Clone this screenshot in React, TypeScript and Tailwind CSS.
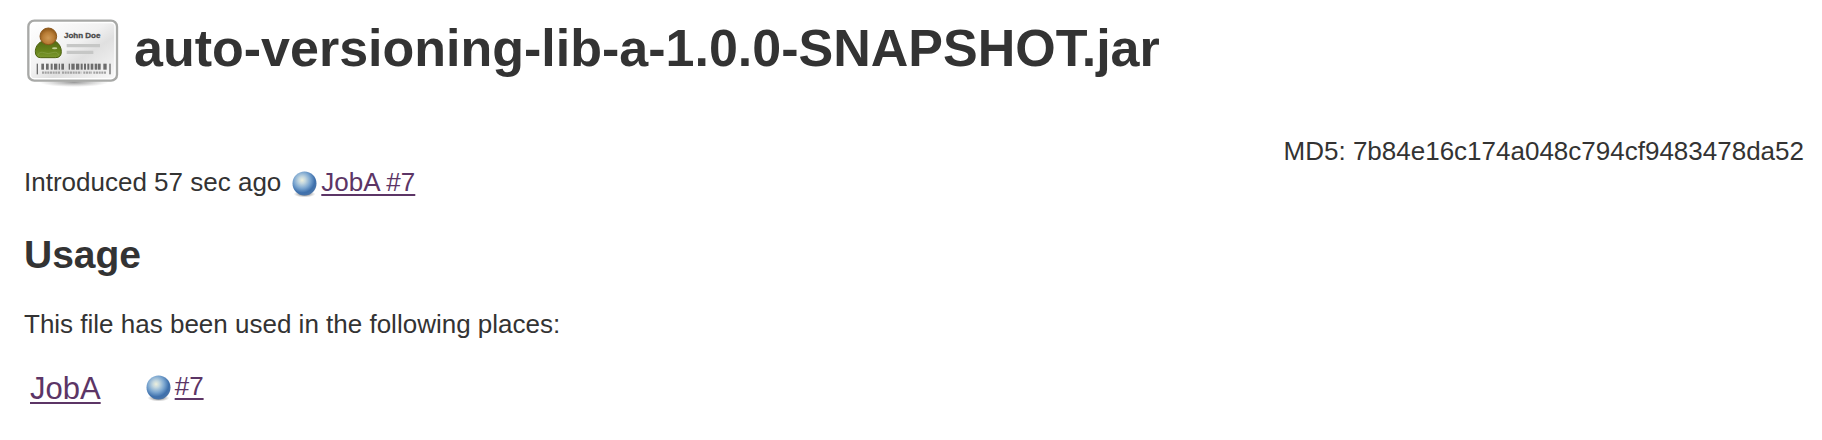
function FingerprintIcon() {
  const bars = [
    [16, 2], [23, 4], [30, 4], [37, 3], [42, 5], [49, 2], [53, 4], [64, 2], [68, 5], [75, 5],
    [82, 3], [87, 3], [92, 3], [97, 4], [103, 4], [108, 4], [116, 5], [125, 2],
  ];
  return (
    <svg viewBox="0 0 144 104" className="h-[70px] w-24 shrink-0" aria-hidden="true">
      <defs>
        <linearGradient id="card" x1="0" y1="0" x2="1" y2="1">
          <stop offset="0" stopColor="#ffffff" />
          <stop offset="0.45" stopColor="#f1f1f1" />
          <stop offset="0.62" stopColor="#e0e0e0" />
          <stop offset="1" stopColor="#f8f8f8" />
        </linearGradient>
        <radialGradient id="head" cx="0.5" cy="0.6" r="0.55">
          <stop offset="0" stopColor="#d09a56" />
          <stop offset="0.6" stopColor="#b97d36" />
          <stop offset="1" stopColor="#925b1b" />
        </radialGradient>
        <linearGradient id="torso" x1="0" y1="0" x2="0" y2="1">
          <stop offset="0" stopColor="#566c14" />
          <stop offset="0.55" stopColor="#66831a" />
          <stop offset="1" stopColor="#7c982f" />
        </linearGradient>
        <radialGradient id="shade">
          <stop offset="0" stopColor="#555" stopOpacity="0.6" />
          <stop offset="1" stopColor="#777" stopOpacity="0" />
        </radialGradient>
      </defs>
      <ellipse cx="72" cy="96" rx="52" ry="7" fill="url(#shade)" />
      <rect x="3.5" y="3.5" width="133" height="90" rx="9" fill="#fff" stroke="#a8a9a7" strokeWidth="3.5" />
      <rect x="7.5" y="7.5" width="125" height="82" rx="5" fill="url(#card)" />
      <path
        d="M23 35C17 38 14 44 14 50C14 56 17 59 22 59H44C50 59 53 56 53 50C53 44 50 38 45 35Z"
        fill="url(#torso)"
        stroke="#4c6110"
        strokeWidth="1.5"
      />
      <path d="M18 56Q19 50 25 51Q33 55 42 51Q48 50 49 56" fill="none" stroke="#8aa24a" strokeWidth="1" />
      <ellipse cx="43" cy="45" rx="4" ry="1.5" fill="#c3d095" />
      <circle cx="33.5" cy="27" r="12.5" fill="url(#head)" stroke="#8c571b" strokeWidth="1.5" />
      <text
        x="57"
        y="30"
        fontFamily="Liberation Sans, sans-serif"
        fontWeight="700"
        fontSize="12"
        fill="#4a4a4a"
        stroke="#4a4a4a"
        strokeWidth="0.5"
      >
        John Doe
      </text>
      <path d="M61 41H111M61 51H101" stroke="#c6c7c6" strokeWidth="5" />
      {bars.map(([x, w]) => (
        <rect key={x} x={x} y="68" width={w} height={x === 16 || x === 125 ? 16 : 9} fill="#6c6c6c" />
      ))}
      <path d="M24 81.5H51M54 81.5H83M86 81.5H99M101 81.5H121" stroke="#a2a2a2" strokeWidth="3.5" strokeDasharray="3 1" />
    </svg>
  );
}

function StatusBall() {
  return (
    <svg viewBox="0 0 32 32" className="size-8 shrink-0" role="img" aria-label="Success">
      <defs>
        <radialGradient id="ball" cx="0.4" cy="0.36" r="0.66">
          <stop offset="0" stopColor="#eef0dc" />
          <stop offset="0.22" stopColor="#c2d6df" />
          <stop offset="0.52" stopColor="#7ba6d0" />
          <stop offset="0.8" stopColor="#3e70ac" />
          <stop offset="1" stopColor="#4a74a8" />
        </radialGradient>
        <radialGradient id="ballShade">
          <stop offset="0.4" stopColor="#444" stopOpacity="0.5" />
          <stop offset="1" stopColor="#777" stopOpacity="0" />
        </radialGradient>
      </defs>
      <ellipse cx="15.5" cy="28" rx="11" ry="3.5" fill="url(#ballShade)" />
      <circle cx="15.5" cy="17.5" r="12" fill="url(#ball)" />
    </svg>
  );
}

const link = "text-[#5c3566] underline decoration-2 underline-offset-3";

export default function App() {
  return (
    <main className="bg-white px-6 pt-[18px] pb-8 font-['Liberation_Sans',Arial,sans-serif] text-[26px] leading-[30px] text-[#333]">
      <h1 className="flex items-start gap-3 pl-0.5 text-[52px] leading-[60px] font-bold">
        <FingerprintIcon />
        <span>auto-versioning-lib-a-1.0.0-SNAPSHOT.jar</span>
      </h1>
      <p className="-mr-1.5 mt-12 text-right">MD5: 7b84e16c174a048c794cf9483478da52</p>
      <p className="flex items-center">
        <span>Introduced 57 sec ago</span>
        <span className="ml-2 flex items-center">
          <StatusBall />
          <a href="#job-a-7" className={link}>JobA #7</a>
        </span>
      </p>
      <h2 className="mt-[34px] text-[39px] leading-[46px] font-bold">Usage</h2>
      <p className="mt-[31px]">This file has been used in the following places:</p>
      <table className="mt-[31px]">
        <tbody>
          <tr>
            <td className="pt-px pr-[42px] pl-1.5 align-top text-[31px] leading-9">
              <a href="#job-a" className={link}>JobA</a>
            </td>
            <td className="align-top">
              <span className="flex items-center">
                <StatusBall />
                <a href="#build-7" className={link}>#7</a>
              </span>
            </td>
          </tr>
        </tbody>
      </table>
    </main>
  );
}
